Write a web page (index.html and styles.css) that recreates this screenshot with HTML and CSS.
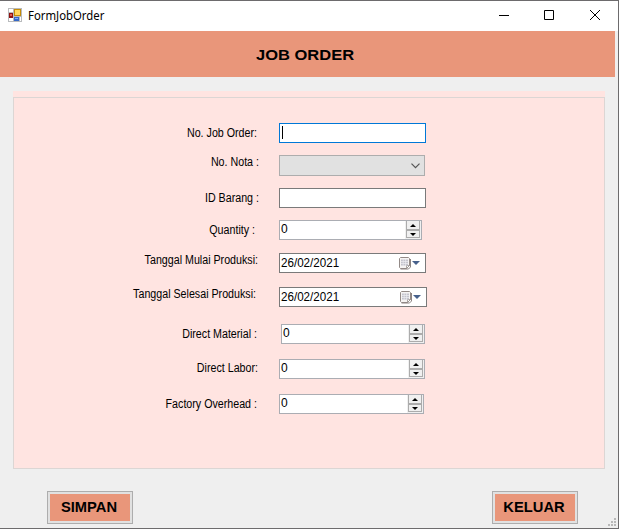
FILE: index.html
```html
<!DOCTYPE html>
<html lang="id">
<head>
<meta charset="utf-8">
<title>FormJobOrder</title>
<link rel="stylesheet" href="styles.css">
</head>
<body>
<svg class="defs" width="0" height="0">
  <symbol id="calendar" viewBox="0 0 12 13">
    <path d="M1.500.5h8l1 1v7l-3 3h-6l-1-1v-9z" fill="#f6f4f3" stroke="#938a87"/>
    <path d="M11.500 2v8l-2 2h-8" fill="none" stroke="#8d8482"/>
    <path d="M10.500 8.500l-3 3v-3z" fill="#fff" stroke="#8a8280" stroke-width=".7"/>
    <path d="M2 2.500h7v6h-7z" fill="#c3c3cc"/>
    <path d="M2 4.500h7M2 6.500h7M4.200 2v7M6.600 2v7" stroke="#eeeef2" stroke-width=".7"/>
  </symbol>
</svg>
<div class="window">
  <header class="titlebar">
    <svg class="app-icon" width="14" height="14" viewBox="0 0 14 14" shape-rendering="crispEdges">
      <path d="M0 0h14v14H0z" fill="#b9bbbd"/>
      <path d="M1 1h4v3H1zM1 10h4v3H1zM12 9h1v4h-1z" fill="#fff"/>
      <path d="M6 1h7v7H6z" fill="#c58d08"/><path d="M7 2h5v5H7z" fill="#ffd75c"/>
      <path d="M1 5h4v5H1z" fill="#8e1212"/><path d="M2 6h2v2H2z" fill="#e25d50"/>
      <path d="M6 9h5v4H6z" fill="#3468c8"/><path d="M7 10h3v1H7z" fill="#82aef5"/>
    </svg>
    <span class="title">FormJobOrder</span>
    <svg class="controls" width="102" height="12" viewBox="0 0 102 12">
      <path d="M0 5.500h10" stroke="#000"/>
      <path d="M45.500 .5h9v9h-9z" fill="none" stroke="#000"/>
      <path d="M91 0l10 10M101 0l-10 10" stroke="#000" stroke-width="1"/>
    </svg>
  </header>
  <div class="banner"><h1>JOB ORDER</h1></div>
  <main class="panel">
    <form class="group">
      <div class="row r1"><label>No. Job Order:</label><div class="field focus"><i class="caret"></i></div></div>
      <div class="row r2"><label>No. Nota :</label><div class="field combo"><svg width="9" height="6" viewBox="0 0 9 6"><path d="M.5.7l4 4 4-4" fill="none" stroke="#555" stroke-width="1.200"/></svg></div></div>
      <div class="row r3"><label>ID Barang :</label><div class="field"></div></div>
      <div class="row r4"><label>Quantity :</label><div class="field number"><span>0</span><div class="spin"><b class="up"></b><b class="down"></b></div></div></div>
      <div class="row r5"><label>Tanggal Mulai Produksi:</label><div class="field date"><span>26/02/2021</span><svg width="12" height="13"><use href="#calendar"/></svg><i class="drop"></i></div></div>
      <div class="row r6"><label>Tanggal Selesai Produksi:</label><div class="field date"><span>26/02/2021</span><svg width="12" height="13"><use href="#calendar"/></svg><i class="drop"></i></div></div>
      <div class="row r7"><label>Direct Material :</label><div class="field number"><span>0</span><div class="spin"><b class="up"></b><b class="down"></b></div></div></div>
      <div class="row r8"><label>Direct Labor:</label><div class="field number"><span>0</span><div class="spin"><b class="up"></b><b class="down"></b></div></div></div>
      <div class="row r9"><label>Factory Overhead :</label><div class="field number"><span>0</span><div class="spin"><b class="up"></b><b class="down"></b></div></div></div>
    </form>
  </main>
  <footer class="actions">
    <button type="button"><span>SIMPAN</span></button>
    <button type="button"><span>KELUAR</span></button>
  </footer>
  <svg class="grip" width="8" height="8" viewBox="0 0 8 8" shape-rendering="crispEdges"><path d="M6 0h2v2H6zM3 3h2v2H3zM6 3h2v2H6zM0 6h2v2H0zM3 6h2v2H3zM6 6h2v2H6z" fill="#b8b8b8"/></svg>
</div>
</body>
</html>
```
FILE: styles.css
```css
* { box-sizing: border-box; }
body { margin: 0; overflow: hidden; font: 12px/14px "Liberation Sans", sans-serif; color: #000; }
.defs { position: absolute; }
.window {
  position: relative;
  width: 619px;
  height: 529px;
  background: #efefef;
  border: solid #6d6b6d;
  border-width: 1px 1px 1px 0;
  display: flex;
  flex-direction: column;
}
.titlebar { height: 30px; flex: none; background: #fff; display: flex; align-items: flex-start; padding: 7px 17px 0 8px; }
.title { font: 12px/16px "Noto Sans", sans-serif; margin-left: 6px; transform: scaleX(.945); transform-origin: left; }
.controls { margin: 2px 0 0 auto; overflow: visible; }
.banner { width: 615px; height: 46px; flex: none; background: #e9967a; padding-top: 14px; }
.banner h1 { margin: 0 0 0 256px; width: 99px; white-space: nowrap; font: bold 15px/20px "Liberation Sans", sans-serif; transform: scaleX(1.1); transform-origin: left; }
.panel { width: 592px; height: 378px; margin: 14px 0 0 13px; flex: none; padding-top: 6px; background: #ffe4e1; }
.group { height: 372px; margin: 0; border: 1px solid #dcd6d4; padding-top: 25px; }
.row { display: flex; align-items: flex-start; margin-bottom: 12px; height: 20px; }
.row label { width: 243px; margin-right: 22px; text-align: right; white-space: nowrap; padding-top: 3px; transform: scaleX(.89); transform-origin: right; }
.field { width: 147px; height: 20px; flex: none; background: #fff; border: 1px solid #7a7a7a; display: flex; }
.focus { border-color: #0078d7; }
.caret { width: 1px; height: 13px; margin: 2px 0 0 2px; background: #000; }
.combo { width: 146px; height: 21px; background: #e1e1e1; border-color: #adadad; align-items: center; justify-content: flex-end; padding-right: 4px; }
.number { border-color: #abadb3; justify-content: space-between; }
.number span { padding: 1px 0 0 1px; }
.date span { padding: 2px 0 0 1px; width: 119px; transform: scaleX(.97); transform-origin: left; }
.date svg { margin-top: 3px; }
.drop { border: 4px solid transparent; border-top-color: #47618c; border-bottom: 0; margin: 7px 0 0 1px; }
.spin { width: 16px; height: 18px; background: #f0f0f0; padding: 0 1px 0 1px; }
.spin b { display: flex; justify-content: center; align-items: center; width: 14px; height: 9px; border: 1px solid #acacac; }
.spin .up { border-top: 0; }
.spin .down { height: 8px; border-top: 1px solid #acacac; }
.spin b::after { content: ""; border: 3px solid transparent; }
.spin .up::after { border-bottom-color: #000; border-top: 0; }
.spin .down::after { border-top-color: #000; border-bottom: 0; }
.r2 { height: 21px; }
.r2 label { width: 245px; margin-right: 20px; padding-top: 0; }
.r3 label { width: 245px; margin-right: 20px; }
.r4 { margin-bottom: 13px; }
.r4 label { width: 241px; margin-right: 24px; }
.r4 .field { width: 143px; }
.r5 { margin-bottom: 14px; }
.r5 label { width: 244px; margin-right: 21px; padding-top: 0; }
.r6 { margin-bottom: 17px; }
.r6 label { width: 242px; margin-right: 23px; padding-top: 0; }
.r6 .field { width: 148px; }
.r6 .field span { width: 120px; }
.r7 { margin-bottom: 15px; }
.r7 label { width: 243px; margin-right: 24px; }
.r7 .field { width: 144px; }
.r8 { margin-bottom: 15px; }
.r8 label { width: 244px; margin-right: 21px; padding-top: 2px; }
.r8 .field { width: 146px; }
.r9 label { width: 243px; margin-right: 22px; }
.r9 .field { width: 145px; }
.actions { display: flex; justify-content: space-between; padding: 22px 40px 0 47px; }
.actions button { width: 86px; height: 33px; padding: 0; border: 1px solid #adadad; background: #e9967a; box-shadow: inset 0 0 0 2px #e1e1e1; color: #000; font: bold 14px/29px "Liberation Sans", sans-serif; }
.actions span { display: block; margin-left: -2px; transform: scaleX(1.05); }
.grip { position: absolute; right: 2px; bottom: 2px; }
```
